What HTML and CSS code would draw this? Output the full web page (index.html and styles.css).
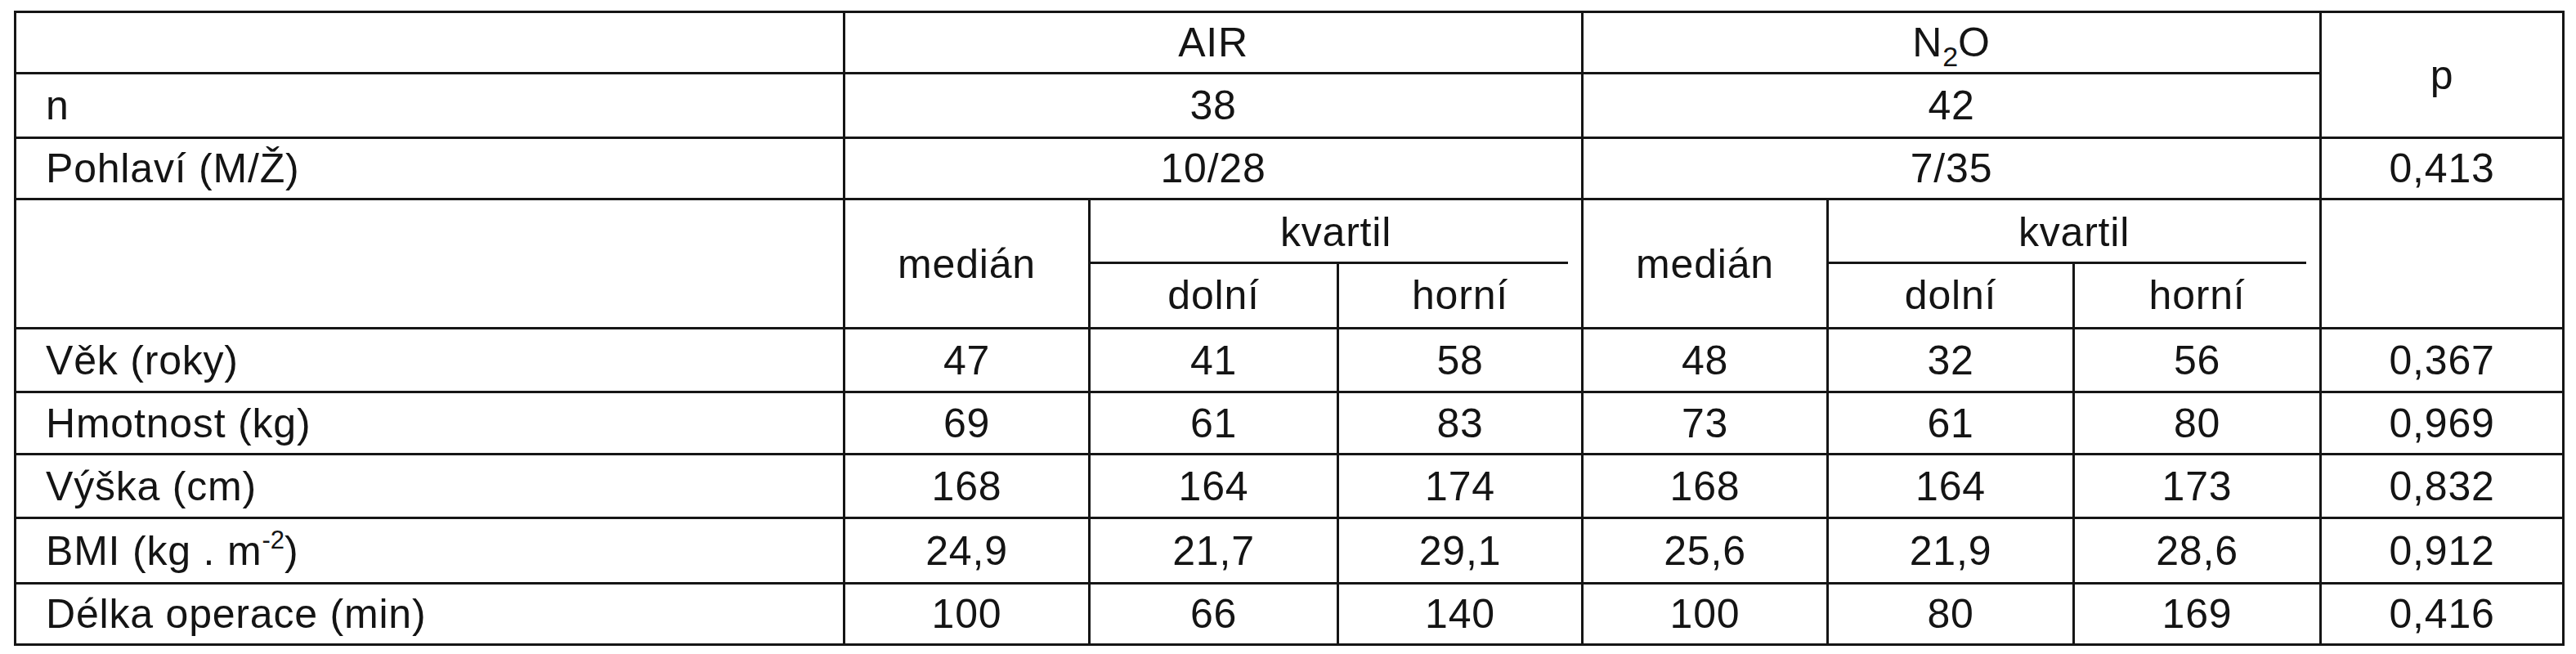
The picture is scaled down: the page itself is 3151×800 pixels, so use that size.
FILE: index.html
```html
<!DOCTYPE html>
<html lang="cs">
<head>
<meta charset="utf-8">
<title>Tabulka</title>
<link rel="stylesheet" href="styles.css">
</head>
<body>
<table class="data">
  <colgroup>
    <col class="c-label">
    <col class="c-med">
    <col class="c-dol">
    <col class="c-hor">
    <col class="c-med2">
    <col class="c-dol2">
    <col class="c-hor2">
    <col class="c-p">
  </colgroup>
  <tr class="r1">
    <td class="label"></td>
    <td colspan="3">AIR</td>
    <td colspan="3">N<sub class="sub">2</sub>O</td>
    <td rowspan="2">p</td>
  </tr>
  <tr class="r2">
    <td class="label">n</td>
    <td colspan="3">38</td>
    <td colspan="3">42</td>
  </tr>
  <tr class="r3">
    <td class="label">Pohlaví (M/Ž)</td>
    <td colspan="3">10/28</td>
    <td colspan="3">7/35</td>
    <td>0,413</td>
  </tr>
  <tr class="r4">
    <td class="label" rowspan="2"></td>
    <td rowspan="2">medián</td>
    <td colspan="2" class="kvartil">kvartil</td>
    <td rowspan="2">medián</td>
    <td colspan="2" class="kvartil">kvartil</td>
    <td rowspan="2"></td>
  </tr>
  <tr class="r5">
    <td class="sub-h">dolní</td>
    <td class="sub-h">horní</td>
    <td class="sub-h">dolní</td>
    <td class="sub-h">horní</td>
  </tr>
  <tr class="r6">
    <td class="label">Věk (roky)</td>
    <td>47</td><td>41</td><td>58</td>
    <td>48</td><td>32</td><td>56</td>
    <td>0,367</td>
  </tr>
  <tr class="r7">
    <td class="label">Hmotnost (kg)</td>
    <td>69</td><td>61</td><td>83</td>
    <td>73</td><td>61</td><td>80</td>
    <td>0,969</td>
  </tr>
  <tr class="r8">
    <td class="label">Výška (cm)</td>
    <td>168</td><td>164</td><td>174</td>
    <td>168</td><td>164</td><td>173</td>
    <td>0,832</td>
  </tr>
  <tr class="r9">
    <td class="label">BMI (kg . m<sup class="sup">-2</sup>)</td>
    <td>24,9</td><td>21,7</td><td>29,1</td>
    <td>25,6</td><td>21,9</td><td>28,6</td>
    <td>0,912</td>
  </tr>
  <tr class="r10">
    <td class="label">Délka operace (min)</td>
    <td>100</td><td>66</td><td>140</td>
    <td>100</td><td>80</td><td>169</td>
    <td>0,416</td>
  </tr>
</table>
</body>
</html>
```

FILE: styles.css
```css
html, body {
  margin: 0;
  padding: 0;
  background: #ffffff;
}

body {
  padding: 13px 0 0 17px;
  font-family: "Liberation Sans", Arial, sans-serif;
  color: #141414;
}

.data {
  border-collapse: collapse;
  table-layout: fixed;
  width: 3120px;
  font-size: 50px;
  letter-spacing: 0.8px;
  line-height: normal;
}

.c-label { width: 1014px; }
.c-med  { width: 300px; }
.c-dol  { width: 304px; }
.c-hor  { width: 299px; }
.c-med2 { width: 300px; }
.c-dol2 { width: 301px; }
.c-hor2 { width: 302px; }
.c-p    { width: 297px; }

.data td {
  border: 3px solid #151515;
  padding: 0;
  text-align: center;
  vertical-align: middle;
  white-space: nowrap;
}

.data td.label {
  text-align: left;
  padding-left: 36px;
}

.data td.kvartil {
  border-bottom: none;
  background: linear-gradient(#151515, #151515) left bottom / calc(100% - 16px) 3px no-repeat;
}

.data td.sub-h {
  border-top: none;
}

.r1  { height: 75px; }
.r2  { height: 79px; }
.r3  { height: 75px; }
.r4  { height: 79px; }
.r5  { height: 79px; }
.r6  { height: 78px; }
.r7  { height: 76px; }
.r8  { height: 78px; }
.r9  { height: 80px; }
.r10 { height: 75px; }

.sub {
  font-size: 34px;
  vertical-align: -12px;
  line-height: 0;
  letter-spacing: 0;
}

.sup {
  font-size: 31px;
  vertical-align: 20px;
  line-height: 0;
  letter-spacing: 0;
}
```
